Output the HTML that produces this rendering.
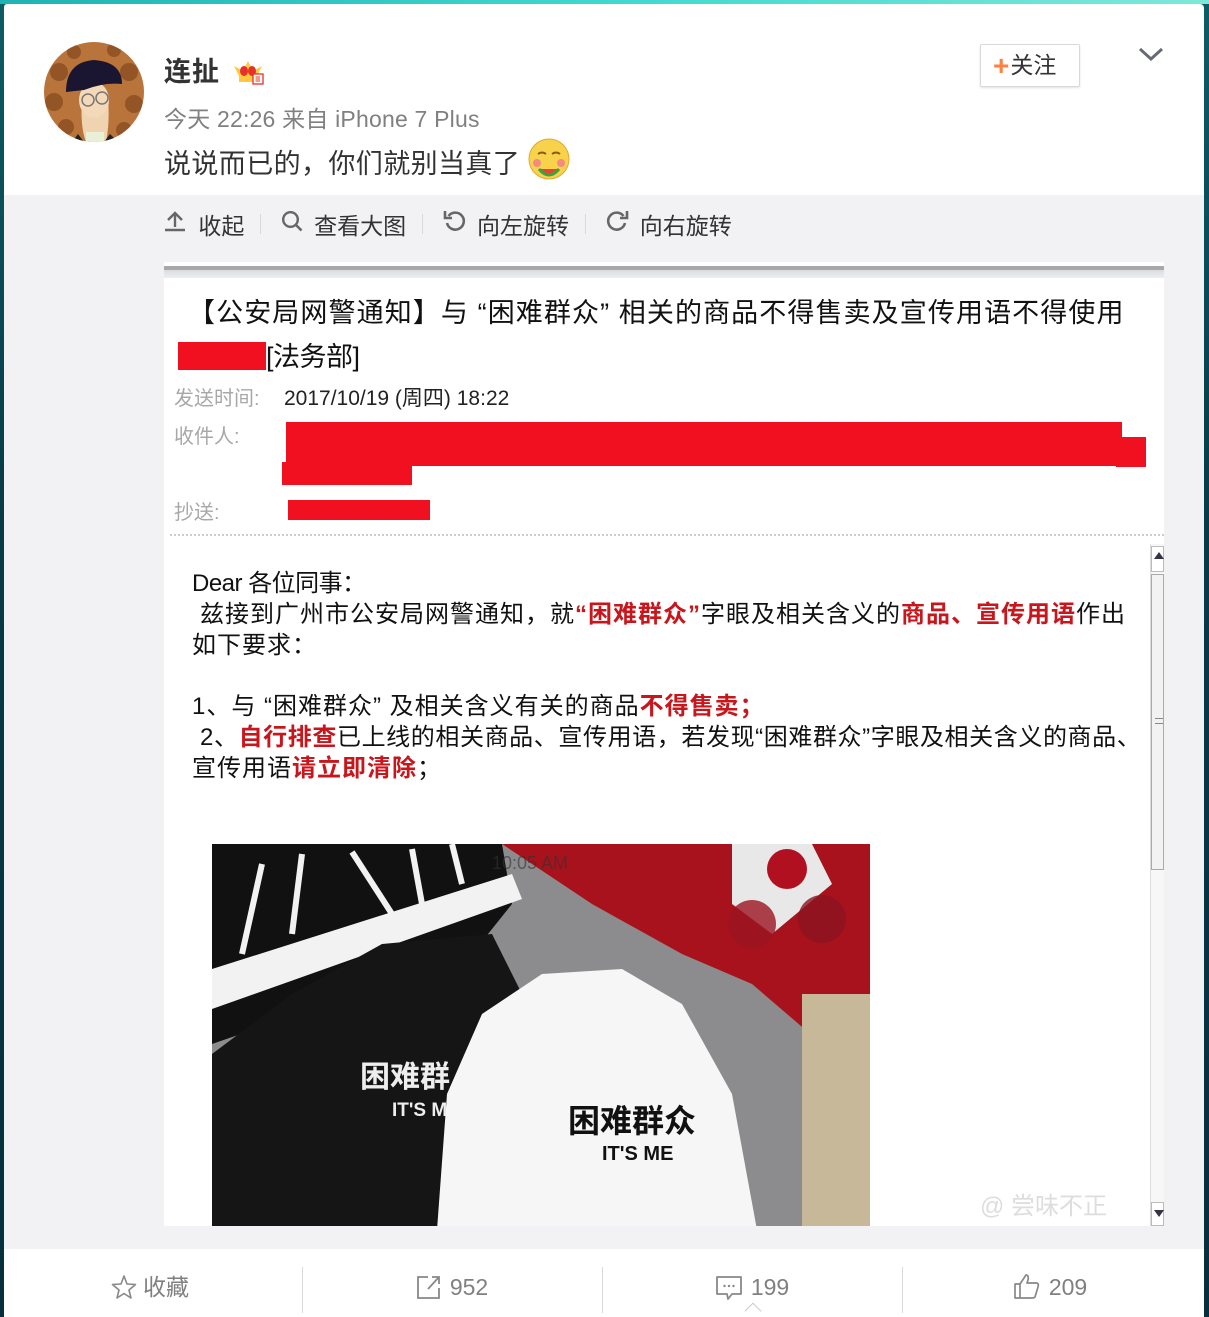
<!DOCTYPE html>
<html><head><meta charset="utf-8">
<style>
*{margin:0;padding:0;box-sizing:border-box}
html,body{width:1209px;height:1317px;overflow:hidden}
body{background:linear-gradient(180deg,#0c5d66 0%,#073a48 40%,#052f3c 100%);font-family:"Liberation Sans","Noto Sans CJK SC",sans-serif;position:relative}
.topbar{position:absolute;left:0;top:0;width:1209px;height:4px;background:linear-gradient(90deg,#1fb3b3,#3fd8cf 50%,#7ee8d8)}
.card{position:absolute;left:4px;top:4px;width:1200px;height:1313px;background:#fff;border-radius:3px 4px 0 0;overflow:hidden}
.abs{position:absolute}
.name{left:160px;top:46px;font-size:27px;font-weight:bold;color:#333;letter-spacing:1px}
.meta{left:160px;top:96px;font-size:23px;color:#808080;letter-spacing:0.2px}
.txt{left:160px;top:138px;font-size:27px;color:#333;letter-spacing:0.4px}
.follow{left:976px;top:40px;width:100px;height:43px;border:1px solid #d9d9d9;border-radius:2px;box-shadow:0 1px 2px rgba(0,0,0,.12);font-size:23px;color:#333;line-height:41px;padding-left:12px}
.follow b{color:#ff8140;font-size:28px;font-weight:bold;vertical-align:-2px;margin-right:1px}
.gray{left:0;top:191px;width:1200px;height:1054px;background:#f2f2f5}
.tools{left:160px;top:203px;font-size:23px;color:#333;white-space:nowrap}
.tools span{display:inline-block;vertical-align:middle}
.sep{width:1px;height:20px;background:#d9d9d9;margin:0 13px 0 16px}
.img{left:160px;top:258px;width:1000px;height:964px;background:#fff;overflow:hidden}
.e{position:absolute;font-family:"Liberation Sans","Noto Sans CJK SC",sans-serif;color:#111;white-space:nowrap}
.red{color:#c8161d;font-weight:bold}
.lab{color:#a8a8a8;font-size:20px}
.bar{position:absolute;background:#f01020}
.foot{left:0;top:1245px;width:1200px;height:68px;background:#fff}
.fi{position:absolute;top:10px;height:56px;font-size:23px;color:#808080;line-height:56px;text-align:center}
.fsep{position:absolute;top:18px;width:1px;height:46px;background:#d9d9d9}
</style></head><body>
<div class="topbar"></div>
<div class="card">
  <svg class="abs" style="left:40px;top:38px" width="100" height="100" viewBox="0 0 100 100">
    <defs><clipPath id="c"><circle cx="50" cy="50" r="50"/></clipPath></defs>
    <g clip-path="url(#c)">
      <rect width="100" height="100" fill="#b8743a"/>
      <g fill="#8a4e22" opacity=".8">
        <circle cx="15" cy="30" r="9"/><circle cx="85" cy="30" r="9"/><circle cx="10" cy="60" r="9"/><circle cx="90" cy="62" r="9"/><circle cx="22" cy="85" r="8"/><circle cx="80" cy="88" r="8"/><circle cx="30" cy="10" r="7"/><circle cx="70" cy="8" r="7"/>
      </g>
      <path d="M38 55 Q36 85 42 100 H62 Q66 80 64 55 Z" fill="#f0d3b0"/>
      <ellipse cx="50" cy="58" rx="15" ry="18" fill="#f4d9b8"/>
      <path d="M22 50 Q22 20 50 18 Q78 20 78 42 Q60 40 40 48 Z" fill="#1a1530"/>
      <circle cx="44" cy="58" r="6" fill="none" stroke="#777" stroke-width="1.5"/><circle cx="58" cy="56" r="6" fill="none" stroke="#777" stroke-width="1.5"/>
      <path d="M34 92 L40 100 H28 Z M66 92 L60 100 H74 Z" fill="#222"/>
      <rect x="42" y="90" width="18" height="10" fill="#e8f0d8"/>
    </g>
  </svg>
  <div class="abs name">连扯</div>
  <svg class="abs" style="left:227px;top:52px" width="36" height="30" viewBox="0 0 36 30">
    <path d="M3 10 L9 22 H25 L31 10 L22 15 L17 5 L12 15 Z" fill="#ffc83d"/>
    <rect x="8" y="20" width="18" height="6" fill="#ffc83d"/>
    <ellipse cx="13" cy="15" rx="4" ry="5" fill="#e8302a"/><ellipse cx="21" cy="15" rx="4" ry="5" fill="#e8302a"/>
    <rect x="22" y="18" width="10" height="10" fill="#fff" stroke="#e8302a" stroke-width="1.3"/>
    <path d="M24.5 21 H29 M24.5 23 H29 M24.5 25 H29" stroke="#e8302a" stroke-width="1"/>
  </svg>
  <div class="abs meta">今天 22:26 来自 iPhone 7 Plus</div>
  <div class="abs txt">说说而已的，你们就别当真了</div>
  <svg class="abs" style="left:523px;top:133px" width="44" height="46" viewBox="0 0 44 46">
    <circle cx="22" cy="22" r="20" fill="#f7d24a"/><circle cx="22" cy="22" r="20" fill="none" stroke="#e0aa30" stroke-width="1"/>
    <path d="M11 17 q4 -3 8 0 M25 17 q4 -3 8 0" stroke="#8a5a10" stroke-width="2" fill="none"/>
    <circle cx="10" cy="26" r="4" fill="#f58a80"/><circle cx="34" cy="26" r="4" fill="#f58a80"/>
    <path d="M12 32 Q22 46 32 32 Z" fill="#e8443a"/><path d="M12 32 Q22 44 32 32" stroke="#3da33c" stroke-width="3" fill="none"/>
  </svg>
  <div class="abs follow"><b>+</b>关注</div>
  <svg class="abs" style="left:1134px;top:42px" width="26" height="16" viewBox="0 0 26 16"><path d="M2 3 L13 13 L24 3" stroke="#666b73" stroke-width="3" fill="none"/></svg>

  <div class="abs gray"></div>
  <div class="abs tools">
    <span><svg width="22" height="22" viewBox="0 0 22 22"><path d="M11 17 V4 M4 10 L11 3 L18 10" stroke="#666" stroke-width="2.4" fill="none"/><path d="M1 20 H21" stroke="#666" stroke-width="2.4"/></svg></span>
    <span style="margin-left:6px">收起</span><span class="sep"></span>
    <span><svg width="22" height="22" viewBox="0 0 22 22"><circle cx="9.5" cy="9.5" r="7.3" stroke="#666" stroke-width="2.4" fill="none"/><path d="M15 15 L20.5 20.5" stroke="#666" stroke-width="2.6"/></svg></span>
    <span style="margin-left:5px">查看大图</span><span class="sep"></span>
    <span><svg width="24" height="24" viewBox="0 0 24 24"><path d="M5.5 7 A8.5 8.5 0 1 1 4 14" stroke="#666" stroke-width="2.6" fill="none"/><path d="M2 2 V9 H9" stroke="#666" stroke-width="2.6" fill="none"/></svg></span>
    <span style="margin-left:4px">向左旋转</span><span class="sep"></span>
    <span><svg width="24" height="24" viewBox="0 0 24 24"><path d="M18.5 7 A8.5 8.5 0 1 0 20 14" stroke="#666" stroke-width="2.6" fill="none"/><path d="M22 2 V9 H15" stroke="#666" stroke-width="2.6" fill="none"/></svg></span>
    <span style="margin-left:4px">向右旋转</span>
  </div>

  <div class="abs img">
    <div style="position:absolute;left:0;top:4px;width:1000px;height:4px;background:#a8a8a8"></div>
    <div style="position:absolute;left:0;top:8px;width:1000px;height:8px;background:linear-gradient(#dadde0,#eceef0)"></div>
    <div class="e" style="left:24px;top:29px;font-size:27px;letter-spacing:1.1px">【公安局网警通知】与 “困难群众” 相关的商品不得售卖及宣传用语不得使用</div>
    <div class="bar" style="left:14px;top:80px;width:88px;height:28px"></div>
    <div class="e" style="left:102px;top:73px;font-size:27px;letter-spacing:-0.5px">[法务部]</div>
    <div class="e lab" style="left:10px;top:120px">发送时间:</div>
    <div class="e" style="left:120px;top:120px;font-size:21px;color:#222">2017/10/19 (周四) 18:22</div>
    <div class="e lab" style="left:10px;top:158px">收件人:</div>
    <div class="bar" style="left:122px;top:160px;width:836px;height:44px"></div>
    <div class="bar" style="left:952px;top:175px;width:30px;height:30px"></div>
    <div class="bar" style="left:118px;top:200px;width:130px;height:23px"></div>
    <div class="e lab" style="left:10px;top:234px">抄送:</div>
    <div class="bar" style="left:124px;top:238px;width:142px;height:20px"></div>
    <div style="position:absolute;left:6px;top:272px;width:994px;border-top:2px dotted #ccc"></div>
    <div style="position:absolute;left:986px;top:282px;width:14px;height:682px;background:#f7f7f7;border-left:1px solid #ddd"></div>
    <div style="position:absolute;left:987px;top:284px;width:13px;height:26px;border:1px solid #bbb;background:#fff"></div>
    <div style="position:absolute;left:990px;top:290px;border:5px solid transparent;border-bottom:7px solid #334;border-top:0"></div>
    <div style="position:absolute;left:987px;top:312px;width:13px;height:296px;border:1px solid #aaa;background:#f2f2f2"></div>
    <div style="position:absolute;left:991px;top:456px;width:8px;height:6px;border-top:1px solid #888;border-bottom:1px solid #888"></div>
    <div style="position:absolute;left:987px;top:940px;width:13px;height:24px;border:1px solid #bbb;background:#fff"></div>
    <div style="position:absolute;left:990px;top:948px;border:5px solid transparent;border-top:7px solid #334;border-bottom:0"></div>

    <div class="e" style="left:28px;top:301px;font-size:24px;letter-spacing:-0.5px">Dear 各位同事：</div>
    <div class="e" style="left:36px;top:332px;font-size:24px;letter-spacing:1px">兹接到广州市公安局网警通知，就<span class="red">“困难群众”</span>字眼及相关含义的<span class="red">商品、宣传用语</span>作出</div>
    <div class="e" style="left:28px;top:363px;font-size:24px;letter-spacing:1px">如下要求：</div>
    <div class="e" style="left:28px;top:424px;font-size:24px;letter-spacing:1px">1、与 “困难群众” 及相关含义有关的商品<span class="red">不得售卖；</span></div>
    <div class="e" style="left:36px;top:455px;font-size:24px;letter-spacing:0.6px">2、<span class="red">自行排查</span>已上线的相关商品、宣传用语，若发现“困难群众”字眼及相关含义的商品、</div>
    <div class="e" style="left:28px;top:486px;font-size:24px;letter-spacing:1px">宣传用语<span class="red">请立即清除</span>；</div>

    <svg style="position:absolute;left:48px;top:582px" width="658" height="386" viewBox="0 0 658 386">
      <rect width="658" height="386" fill="#8c8c8e"/>
      <path d="M0 0 H290 L300 60 L260 110 L0 200 Z" fill="#111"/>
      <path d="M0 125 L300 30 L310 55 L0 165 Z" fill="#f2f2f2"/>
      <g stroke="#f2f2f2" stroke-width="6" fill="none">
        <path d="M50 20 L30 110"/><path d="M90 10 L80 90"/><path d="M140 8 L180 70"/><path d="M200 5 L210 60"/><path d="M240 0 L250 40"/>
      </g>
      <path d="M290 0 H658 V240 L610 200 L540 140 L470 110 L380 60 Z" fill="#a8121c"/>
      <path d="M520 0 H600 L620 40 L560 90 L520 60 Z" fill="#e8e8e8"/>
      <circle cx="575" cy="25" r="20" fill="#b01020"/>
      <circle cx="540" cy="80" r="24" fill="#9a1420" opacity=".8"/><circle cx="610" cy="75" r="24" fill="#8a1420" opacity=".8"/>
      <rect x="590" y="150" width="68" height="236" fill="#c8b89a"/>
      <path d="M0 210 L80 150 L170 100 L280 90 L310 150 L300 220 L280 386 H0 Z" fill="#151515"/>
      <path d="M225 386 L235 250 L270 170 L330 130 L410 125 L470 160 L520 250 L545 386 Z" fill="#f6f6f6"/>
      <text x="148" y="243" fill="#eee" font-family="Liberation Sans,Noto Sans CJK SC,sans-serif" font-weight="bold" font-size="30">困难群</text>
      <text x="180" y="272" fill="#eee" font-family="Liberation Sans,sans-serif" font-weight="bold" font-size="19">IT'S M</text>
      <text x="356" y="288" fill="#111" font-family="Liberation Sans,Noto Sans CJK SC,sans-serif" font-weight="bold" font-size="32">困难群众</text>
      <text x="390" y="316" fill="#111" font-family="Liberation Sans,sans-serif" font-weight="bold" font-size="20">IT'S ME</text>
      <text x="280" y="25" fill="#333" font-family="Liberation Sans,sans-serif" font-size="18" opacity=".6">10:05 AM</text>
    </svg>
    <div class="e" style="left:816px;top:924px;font-size:24px;color:#ddd">@ 尝味不正</div>
  </div>

  <div class="abs foot">
    <div class="fi" style="left:-4px;width:300px">
      <svg width="26" height="26" viewBox="0 0 26 26" style="vertical-align:-5px;margin-right:6px"><path d="M13 2 L16 10 L24.5 10.5 L18 16 L20 24 L13 19.5 L6 24 L8 16 L1.5 10.5 L10 10 Z" fill="none" stroke="#888" stroke-width="1.6" stroke-linejoin="round"/></svg>收藏</div>
    <div class="fsep" style="left:298px"></div>
    <div class="fi" style="left:298px;width:300px">
      <svg width="26" height="26" viewBox="0 0 26 26" style="vertical-align:-5px;margin-right:8px"><path d="M12 3 H2 V24 H23 V14" fill="none" stroke="#888" stroke-width="1.8"/><path d="M12 15 L23 3 M16 3 H23 V10" fill="none" stroke="#888" stroke-width="1.8"/></svg>952</div>
    <div class="fsep" style="left:598px"></div>
    <div class="fi" style="left:598px;width:300px">
      <svg width="28" height="28" viewBox="0 0 28 28" style="vertical-align:-7px;margin-right:8px"><path d="M2 3 H26 V20 H17 L13 25 L12 20 H2 Z" fill="none" stroke="#888" stroke-width="1.8" stroke-linejoin="round"/><circle cx="9.5" cy="12" r="1.2" fill="#888"/><circle cx="14" cy="12" r="1.2" fill="#888"/><circle cx="18.5" cy="12" r="1.2" fill="#888"/></svg>199</div>
    <div class="fsep" style="left:898px"></div>
    <div class="fi" style="left:896px;width:300px">
      <svg width="28" height="28" viewBox="0 0 28 28" style="vertical-align:-5px;margin-right:8px"><path d="M2 12 H7 V26 H2 Z M7 12 L13 3 Q16 3 15 8 L14 11 H24 Q26 12 25 15 L22 25 Q21 26 19 26 H7" fill="none" stroke="#888" stroke-width="1.7" stroke-linejoin="round"/></svg>209</div>
    <div style="position:absolute;left:743px;top:56px;width:12px;height:12px;border-left:1px solid #ccc;border-top:1px solid #ccc;transform:rotate(45deg);background:#fff"></div>
  </div>
</div>
</body></html>
